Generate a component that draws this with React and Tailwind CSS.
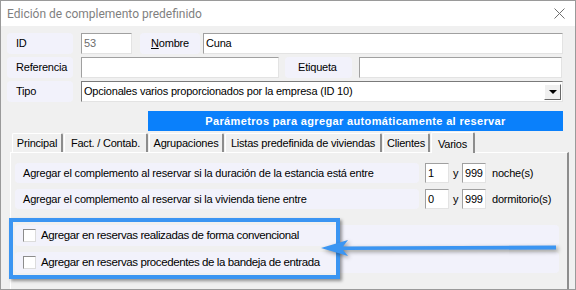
import React from 'react';

// Classic WinForms dialog — "Edición de complemento predefinido", tab "Varios".

const TABS = ['Principal', 'Fact. / Contab.', 'Agrupaciones', 'Listas predefinida de viviendas', 'Clientes'];
const TAB_W = { 'Principal': 'w-[51px]', 'Fact. / Contab.': 'w-[84px]', 'Agrupaciones': 'w-[75px]', 'Listas predefinida de viviendas': 'w-[157px]', 'Clientes': 'w-[47px]' };

function Label({ className = '', children }) {
  return (
    <div className={`h-[21px] flex items-center rounded-[4px] bg-[#f2f2fb] ${className}`}>{children}</div>
  );
}

function Field({ className = '', children, muted }) {
  return (
    <div className={`h-[21px] flex items-center bg-white border-t border-l border-t-[#a0a0a0] border-l-[#a0a0a0] border-b border-r border-b-[#e3e3e3] border-r-[#e3e3e3] pl-[2px] ${muted ? 'text-[#6d6d6d]' : 'text-black'} ${className}`}>
      {children}
    </div>
  );
}

function Check() {
  return <span className="w-[13px] h-[13px] bg-white border-t border-l border-[#8c8c8c] border-b border-r border-b-[#dcdcdc] border-r-[#dcdcdc] shrink-0" />;
}

export default function App() {
  return (
    <div className="relative w-[576px] h-[290px] overflow-hidden bg-[#f0f0f0] border border-[#9a9a9a] font-['Liberation_Sans',Arial,sans-serif] text-[11px] tracking-[-0.2px] text-black">
      {/* Title bar */}
      <div className="h-[25px] bg-white flex items-center justify-between pl-[6px] pr-[10px]">
        <span className="font-['Roboto',sans-serif] text-[12px] tracking-normal text-[#7f7f7f]">Edición de complemento predefinido</span>
        <svg width="11" height="11" viewBox="0 0 11 11">
          <path d="M0.5 0.5 L10.5 10.5 M10.5 0.5 L0.5 10.5" stroke="#6f6f6f" strokeWidth="1" />
        </svg>
      </div>

      {/* Header fields */}
      <div className="pl-[6px] pt-[7px] flex flex-col gap-[3px]">
        <div className="flex">
          <Label className="w-[66px] pl-[9px]">ID</Label>
          <Field muted className="ml-[8px] w-[51px]">53</Field>
          <Label className="ml-[8px] w-[60px] pl-[11px]"><span className="underline">N</span>ombre</Label>
          <Field className="ml-[3px] w-[360px]">Cuna</Field>
        </div>
        <div className="flex">
          <Label className="w-[66px] pl-[9px]">Referencia</Label>
          <Field className="ml-[8px] w-[198px]" />
          <Label className="ml-[6px] w-[67px] pl-[13px]">Etiqueta</Label>
          <Field className="ml-[7px] w-[203px]" />
        </div>
        <div className="flex">
          <Label className="w-[66px] pl-[9px]">Tipo</Label>
          <div className="ml-[8px] w-[482px] h-[21px] flex items-center justify-between bg-white border-t border-l border-[#7a7a7a] border-b border-r border-b-[#e3e3e3] border-r-[#e3e3e3] pl-[2px] pr-[1px]">
            <span>Opcionales varios proporcionados por la empresa (ID 10)</span>
            <span className="w-[17px] h-[16px] flex items-center justify-center bg-[#f0f0f0] border-t border-l border-white border-b border-r border-b-[#696969] border-r-[#696969]">
              <span className="w-0 h-0 border-l-[4px] border-r-[4px] border-t-[4px] border-l-transparent border-r-transparent border-t-black" />
            </span>
          </div>
        </div>
      </div>

      {/* Banner */}
      <div className="ml-[147px] mt-[9px] w-[415px] h-[20px] bg-[#0a80fb] flex items-center justify-center text-white font-bold tracking-[0.35px]">
        Parámetros para agregar automáticamente al reservar
      </div>

      {/* Tabs */}
      <div className="ml-[11px] h-[21px] flex items-end">
        {TABS.map(t => (
          <div key={t} className={`${TAB_W[t]} h-[19px] mr-[1px] flex items-center justify-center border-t border-l border-white border-r-2 border-r-[#8d8d8d] rounded-t-[2px]`}>{t}</div>
        ))}
        <div className="w-[44px] h-[21px] flex items-start pt-[3px] justify-center bg-[#f0f0f0] border-t border-l border-white border-r-2 border-r-[#8d8d8d] rounded-t-[2px] relative z-10 -mb-[1px]">Varios</div>
      </div>

      {/* Tab panel */}
      <div className="ml-[9px] w-[559px] h-[140px] border-t border-l border-white border-r-2 border-r-[#8d8d8d] pl-[4px] pt-[10px] flex flex-col">
        <div className="flex items-center h-[20px]">
          <div className="w-[404px] h-[20px] flex items-center rounded-[4px] bg-[#f2f2fb] pl-[8px]">Agregar el complemento al reservar si la duración de la estancia está entre</div>
          <Field className="ml-[6px] w-[24px] !h-[20px]">1</Field>
          <span className="ml-[4px] w-[9px]">y</span>
          <Field className="w-[24px] !h-[20px]">999</Field>
          <span className="ml-[6px]">noche(s)</span>
        </div>
        <div className="mt-[6px] flex items-center h-[20px]">
          <div className="w-[404px] h-[20px] flex items-center rounded-[4px] bg-[#f2f2fb] pl-[8px]">Agregar el complemento al reservar si la vivienda tiene entre</div>
          <Field className="ml-[6px] w-[24px] !h-[20px]">0</Field>
          <span className="ml-[4px] w-[9px]">y</span>
          <Field className="w-[24px] !h-[20px]">999</Field>
          <span className="ml-[6px]">dormitorio(s)</span>
        </div>
        <div className="mt-[16px] w-[544px] h-[21px] flex items-center gap-[5px] rounded-[4px] bg-[#f2f2fb] pl-[8px] text-[11.5px] tracking-[-0.4px]">
          <Check />
          <span>Agregar en reservas realizadas de forma convencional</span>
        </div>
        <div className="mt-[6px] w-[544px] h-[21px] flex items-center gap-[5px] rounded-[4px] bg-[#f2f2fb] pl-[8px] text-[11.5px] tracking-[-0.4px]">
          <Check />
          <span>Agregar en reservas procedentes de la bandeja de entrada</span>
        </div>
      </div>

      {/* Annotation: highlight box + arrow */}
      <div className="absolute left-[8px] top-[217px] w-[331px] h-[61px] border-[4px] border-[#3b95f2] shadow-[2px_2px_3px_rgba(0,0,0,0.4)]" />
      <svg className="absolute left-[316px] top-[236px] drop-shadow-[2px_2px_2px_rgba(0,0,0,0.4)]" width="245" height="22" viewBox="316 236 245 22">
        <polygon points="320,247 347,239 342,245.5 555,244.5 555,248.5 342,249 347,255" fill="#3b95f2" />
      </svg>
    </div>
  );
}
